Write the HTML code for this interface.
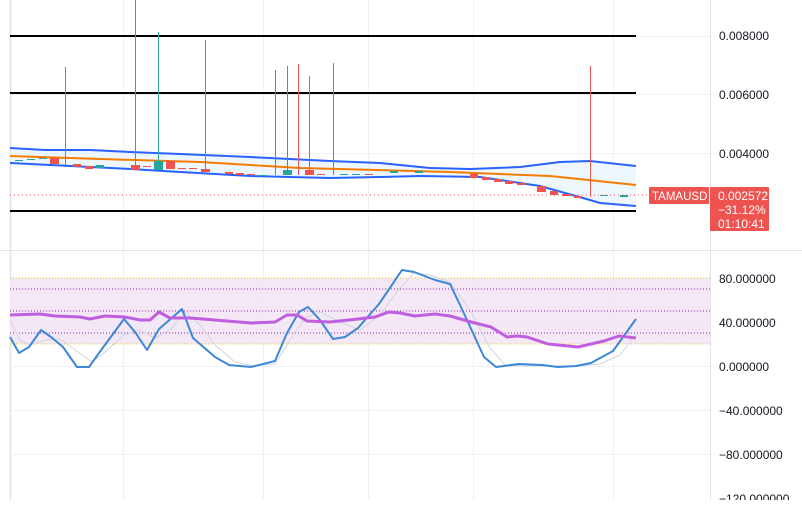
<!DOCTYPE html>
<html><head><meta charset="utf-8"><style>
html,body{margin:0;padding:0;background:#fff;}
body{width:802px;height:500px;overflow:hidden;font-family:"Liberation Sans",sans-serif;}
svg text{font-family:"Liberation Sans",sans-serif;font-size:12px;fill:#131722;}
</style></head><body>
<svg width="802" height="500" viewBox="0 0 802 500" xmlns="http://www.w3.org/2000/svg">
<rect width="802" height="500" fill="#fff"/>
<g stroke="#eef0f3" stroke-width="1">
<line x1="123.5" y1="0" x2="123.5" y2="500"/><line x1="263.5" y1="0" x2="263.5" y2="500"/>
<line x1="368.5" y1="0" x2="368.5" y2="500"/><line x1="473.5" y1="0" x2="473.5" y2="500"/>
<line x1="613.5" y1="0" x2="613.5" y2="500"/>
<line x1="10" y1="153.5" x2="710" y2="153.5"/><line x1="10" y1="94.5" x2="710" y2="94.5"/><line x1="10" y1="36.5" x2="710" y2="36.5"/>
<line x1="10" y1="366.5" x2="710" y2="366.5"/><line x1="10" y1="410.5" x2="710" y2="410.5"/><line x1="10" y1="454.5" x2="710" y2="454.5"/><line x1="10" y1="322.5" x2="710" y2="322.5"/>
</g>
<line x1="10.5" y1="0" x2="10.5" y2="500" stroke="#e0e3eb" stroke-width="1.5"/>
<line x1="710.5" y1="0" x2="710.5" y2="500" stroke="#e0e3eb"/>
<line x1="0" y1="250.5" x2="802" y2="250.5" stroke="#e0e3eb"/>
<g stroke="#000" stroke-width="2"><line x1="10" y1="36" x2="636" y2="36"/><line x1="10" y1="93" x2="636" y2="93"/><line x1="10" y1="211" x2="636" y2="211"/></g>
<path d="M10,148 L45,150 L90,150 L130,152 L180,154 L250,157 L330,161 L380,163 L430,168 L470,169 L520,167 L560,162 L590,161 L636,166 L636,206 L600,203 L590,200 L540,186 L480,177 L420,176 L380,177 L330,178 L250,176 L180,172 L130,169 L10,163Z" fill="#e3f2fd" opacity="0.6"/>
<polyline points="10,148 45,150 90,150 130,152 180,154 250,157 330,161 380,163 430,168 470,169 520,167 560,162 590,161 636,166" fill="none" stroke="#2962ff" stroke-width="2"/>
<polyline points="10,163 130,169 180,172 250,176 330,178 380,177 420,176 480,177 540,186 590,200 600,203 636,206" fill="none" stroke="#2962ff" stroke-width="2"/>
<polyline points="10,156 100,159 200,162 300,168 450,172 550,176 636,185" fill="none" stroke="#f57c00" stroke-width="2"/>
<line x1="10" y1="195" x2="650" y2="195" stroke="#ef5350" stroke-dasharray="1,3"/>
<g stroke-width="1">
<line x1="65.5" y1="67" x2="65.5" y2="165" stroke="#ef5350"/>
<line x1="135.5" y1="0" x2="135.5" y2="170" stroke="#ef5350"/>
<line x1="158.5" y1="32" x2="158.5" y2="170" stroke="#26a69a"/>
<line x1="205.5" y1="40" x2="205.5" y2="172" stroke="#ef5350"/>
<line x1="275.5" y1="70" x2="275.5" y2="175" stroke="#26a69a"/>
<line x1="287.5" y1="66" x2="287.5" y2="175" stroke="#26a69a"/>
<line x1="298.5" y1="64" x2="298.5" y2="175" stroke="#ef5350"/>
<line x1="309.5" y1="76" x2="309.5" y2="175" stroke="#ef5350"/>
<line x1="333.5" y1="63" x2="333.5" y2="175" stroke="#ef5350"/>
<line x1="590.5" y1="66" x2="590.5" y2="197" stroke="#ef5350"/>
</g>
<g fill="#ef5350">
<rect x="50" y="158" width="9" height="6"/><rect x="73" y="164" width="8" height="3"/><rect x="85" y="166" width="8" height="3"/>
<rect x="131" y="165" width="9" height="5"/><rect x="166" y="161" width="9" height="8"/><rect x="201" y="169" width="9" height="3"/>
<rect x="225" y="172" width="8" height="2"/><rect x="236" y="173" width="8" height="2"/><rect x="305" y="170" width="9" height="5"/>
<rect x="143" y="166" width="8" height="1"/><rect x="178" y="168" width="8" height="1"/><rect x="189" y="168" width="8" height="1"/>
<rect x="247" y="174" width="8" height="1"/><rect x="317" y="174" width="8" height="1"/><rect x="365" y="174" width="8" height="1"/>
<rect x="470" y="174" width="8" height="4"/><rect x="482" y="177" width="8" height="3"/><rect x="494" y="179" width="8" height="3"/>
<rect x="505" y="181" width="8" height="3"/><rect x="517" y="183" width="8" height="2"/><rect x="537" y="186" width="9" height="6"/>
<rect x="550" y="191" width="8" height="4"/><rect x="562" y="194" width="8" height="2"/><rect x="574" y="196" width="8" height="2"/>
</g>
<g fill="#26a69a">
<rect x="15" y="160" width="8" height="1"/><rect x="27" y="159" width="8" height="1"/><rect x="39" y="158" width="8" height="1"/>
<rect x="96" y="165" width="8" height="3"/><rect x="154" y="161" width="9" height="9"/><rect x="283" y="170" width="9" height="5"/>
<rect x="259" y="175" width="8" height="1"/><rect x="340" y="174" width="8" height="1"/><rect x="352" y="174" width="8" height="1"/>
<rect x="390" y="171" width="8" height="2"/><rect x="415" y="171" width="8" height="2"/><rect x="620" y="195" width="8" height="2"/>
<rect x="600" y="195" width="8" height="1"/>
</g>
<text x="719" y="40">0.008000</text><text x="719" y="99">0.006000</text><text x="719" y="158">0.004000</text>
<rect x="649" y="187" width="60" height="17" fill="#ef5350" rx="1"/>
<text x="652" y="200" style="fill:#fff;font-size:11.5px">TAMAUSD</text>
<rect x="710" y="187" width="59" height="44" rx="1" fill="#ef5350"/>
<text x="718" y="200" style="fill:#fff">0.002572</text><text x="718" y="214" style="fill:#fff">−31.12%</text><text x="718" y="228" style="fill:#fff">01:10:41</text>
<rect x="10" y="278" width="700" height="66" fill="#f3e5f5" opacity="0.9"/>
<g stroke="#f2c300" stroke-dasharray="1,2"><line x1="10" y1="278" x2="710" y2="278"/><line x1="10" y1="344" x2="710" y2="344"/></g>
<g stroke="#8e24aa" stroke-dasharray="1,2"><line x1="10" y1="289" x2="710" y2="289"/><line x1="10" y1="311" x2="710" y2="311"/><line x1="10" y1="333" x2="710" y2="333"/></g>
<polyline fill="none" stroke="#d1d4dc" stroke-width="1" points="10,320 20,340 30,345 45,340 60,339 75,350 92,362 105,352 124,335 140,330 155,338 170,330 185,312 200,325 215,345 235,362 255,366 275,364 290,340 305,318 320,312 340,322 360,330 380,315 400,288 414,273 430,275 450,282 470,310 490,348 505,365 525,366 560,366 580,366 600,364 620,355 636,334"/>
<polyline fill="none" stroke="#3d87d8" stroke-width="2" stroke-linejoin="round" points="10,337 19,353 29,347 41,330 51,337 63,347 77,367 89,367 99,353 124,319 135,332 147,350 159,329 182,309 193,338 215,357 229,365 251,367 275,361 287,333 299,312 308,307 320,320 333,339 345,337 358,328 379,304 402,270 414,272 435,280 450,284 461,307 484,357 496,367 519,364 542,365 558,367 576,366 591,363 613,351 636,319"/>
<polyline fill="none" stroke="#c05ee0" stroke-width="3" stroke-linejoin="round" points="10,315 40,314 55,316 80,317 90,319 105,316 125,317 140,320 150,320 159,312 170,318 190,318 215,320 251,323 275,322 287,315 297,315 307,321 330,322 358,319 375,317 389,312 400,313 415,316 435,314 450,316 471,322 491,327 507,337 517,336 527,337 548,344 578,347 604,341 619,336 636,338"/>
<text x="719" y="283">80.000000</text><text x="719" y="327">40.000000</text><text x="719" y="371">0.000000</text>
<text x="719" y="415">−40.000000</text><text x="719" y="459">−80.000000</text><text x="719" y="503">−120.000000</text>
</svg>
</body></html>
